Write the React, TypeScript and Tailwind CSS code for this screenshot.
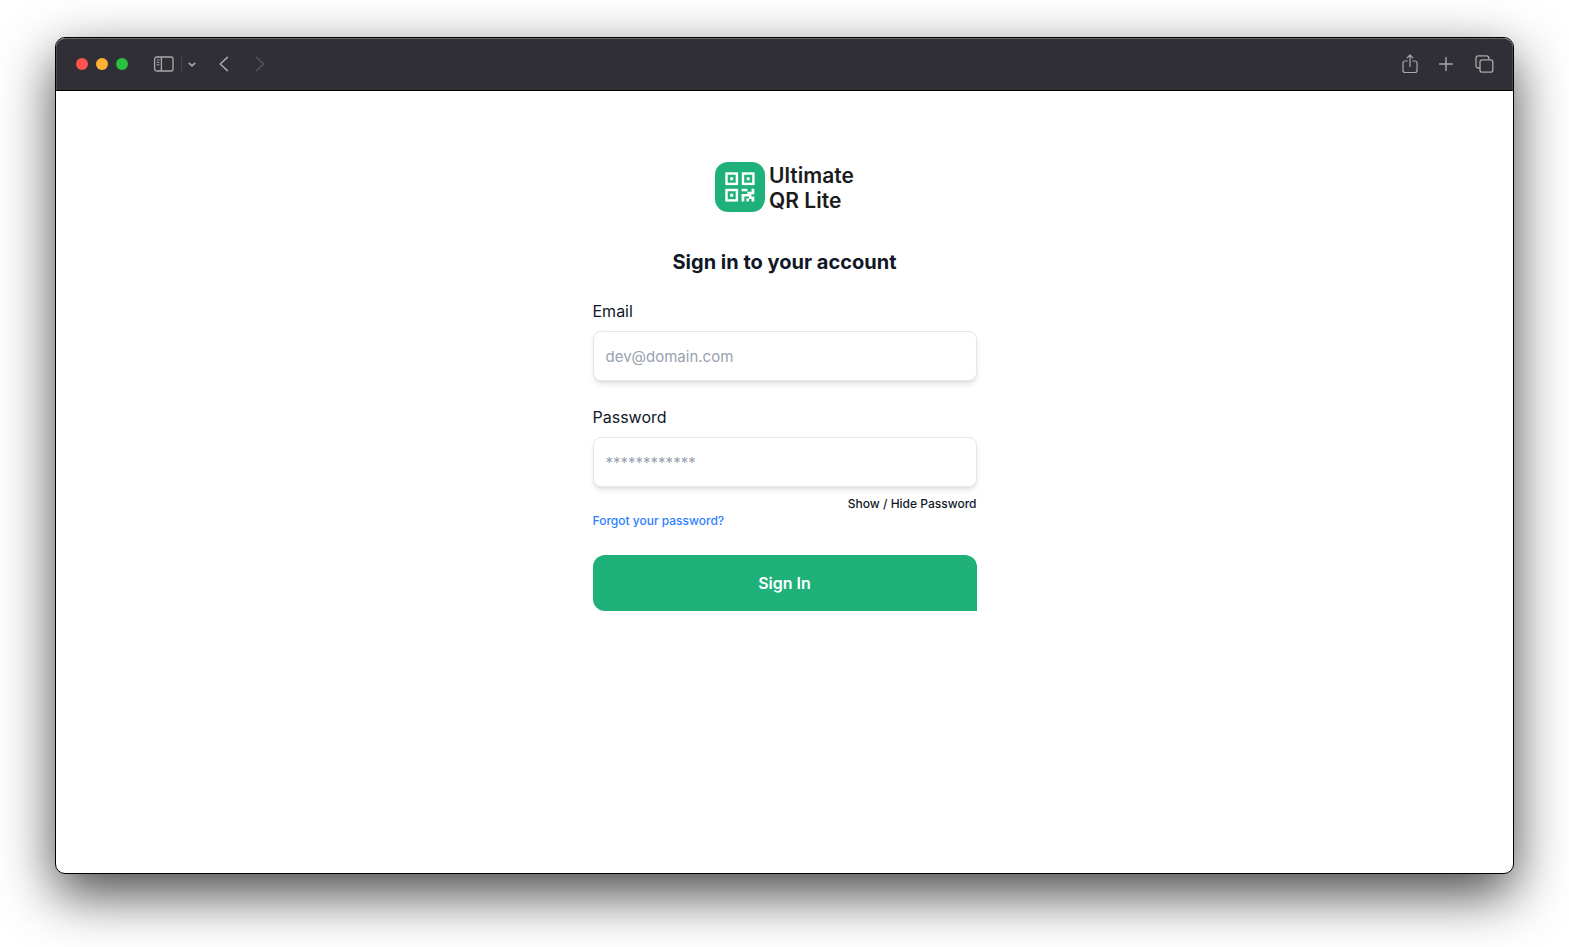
import { useState, type FormEvent, type ReactNode } from 'react';

interface ToolbarButtonProps {
  label: string;
  className?: string;
  disabled?: boolean;
  children?: ReactNode;
}

function ToolbarButton({ label, className = '', disabled, children }: ToolbarButtonProps) {
  return (
    <button type="button" aria-label={label} disabled={disabled} className={`flex items-center justify-center ${className}`}>
      {children}
    </button>
  );
}

function BrowserToolbar() {
  return (
    <header className="flex h-[53px] items-center justify-between rounded-t-[9px] border-x border-t border-b border-x-[#4a4a50] border-t-[#67676c] border-b-black bg-[#312f36] pr-4 pb-[2px] pl-[19px] text-[#a9a8ac]">
      <div className="flex items-center">
        {/* Window controls */}
        <div className="flex gap-2">
          <ToolbarButton label="Close" className="size-3 rounded-full bg-[#ff5350]" />
          <ToolbarButton label="Minimize" className="size-3 rounded-full bg-[#fdb135]" />
          <ToolbarButton label="Zoom" className="size-3 rounded-full bg-[#2ac03f]" />
        </div>

        <ToolbarButton label="Sidebar" className="ml-6">
          <svg width="24" height="18" viewBox="0 0 24 18" fill="none" stroke="currentColor" strokeWidth="1.3">
            <rect x="2.6" y="2" width="18.4" height="14" rx="2" />
            <path d="M9.4 2v14" />
            <path d="M4.8 5h2.6M4.8 7.4h2.6M4.8 9.8h2.6" strokeWidth="1" />
          </svg>
        </ToolbarButton>
        <span className="ml-[5px] h-[18px] w-px bg-[#45444a]" />
        <ToolbarButton label="Tab groups" className="ml-1">
          <svg width="12" height="12" viewBox="0 0 12 12" fill="none" stroke="currentColor" strokeWidth="1.6" strokeLinecap="round" strokeLinejoin="round">
            <path d="M3.2 5.3 6 7.8l2.8-2.5" />
          </svg>
        </ToolbarButton>
        <ToolbarButton label="Back" className="ml-[17px]">
          <svg width="18" height="18" viewBox="0 0 18 18" fill="none" stroke="currentColor" strokeWidth="1.5" strokeLinecap="round" strokeLinejoin="round">
            <path d="M12.4 2.4 5.2 9l7.2 6.6" />
          </svg>
        </ToolbarButton>
        <ToolbarButton label="Forward" className="ml-[18px] text-[#56555b]" disabled>
          <svg width="18" height="18" viewBox="0 0 18 18" fill="none" stroke="currentColor" strokeWidth="1.5" strokeLinecap="round" strokeLinejoin="round">
            <path d="M5.6 2.4 12.8 9l-7.2 6.6" />
          </svg>
        </ToolbarButton>
      </div>

      <div className="flex items-center gap-4">
        <ToolbarButton label="Share">
          <svg width="20" height="22" viewBox="0 0 20 22" fill="none" stroke="currentColor" strokeWidth="1.2" strokeLinecap="round" strokeLinejoin="round">
            <path d="M7.2 8H5a2 2 0 0 0-2 2v7.5a2 2 0 0 0 2 2h10a2 2 0 0 0 2-2V10a2 2 0 0 0-2-2h-2.2" />
            <path d="M10 13.5V2.3M7.2 4.8 10 2l2.8 2.8" />
          </svg>
        </ToolbarButton>
        <ToolbarButton label="New tab">
          <svg width="20" height="20" viewBox="0 0 20 20" fill="none" stroke="currentColor" strokeWidth="1.4" strokeLinecap="round">
            <path d="M10 3.6v12.8M3.6 10h12.8" />
          </svg>
        </ToolbarButton>
        <ToolbarButton label="Tab overview">
          <svg width="24" height="22" viewBox="0 0 24 22" fill="none" stroke="currentColor" strokeWidth="1.3" strokeLinejoin="round">
            <rect x="8" y="6.8" width="12.8" height="12.4" rx="2.2" />
            <path d="M8 15H6.2A2.2 2.2 0 0 1 4 12.8V5a2.2 2.2 0 0 1 2.2-2.2h8.4A2.2 2.2 0 0 1 16.8 5v1.8" />
          </svg>
        </ToolbarButton>
      </div>
    </header>
  );
}

function Logo() {
  return (
    <a href="#" className="flex items-center gap-1">
      <svg width="50" height="50" viewBox="0 0 50 50" aria-hidden="true">
        <rect width="50" height="50" rx="13" fill="#1eb17a" />
        <g fill="none" stroke="#fff" strokeWidth="2.4">
          <rect x="11.5" y="11.5" width="10.4" height="10.4" />
          <rect x="28" y="11.5" width="10.4" height="10.4" />
          <rect x="11.5" y="28" width="10.4" height="10.4" />
        </g>
        <g fill="#fff">
          <path d="M15.2 15.2h3v3h-3zM31.7 15.2h3v3h-3zM15.2 31.7h3v3h-3z" />
          <path d="M26.6 26.8h5.8v2.5h-5.8zM36.6 26.8h2.7v5.4h-6.9v-2.5h4.2zM26.6 32h9.8v2.5h-7.1v5.1h-2.7zM31.4 36.4H34v3.2h-2.6zM34 34.4h5.3v5.2h-2.7v-2.7H34z" />
        </g>
      </svg>
      <span className="pt-0.5 text-[21px] leading-[25px] font-semibold text-[#1b1b1b]">
        Ultimate
        <br />
        QR Lite
      </span>
    </a>
  );
}

interface FieldProps {
  id: string;
  label: string;
  type: string;
  placeholder: string;
  value: string;
  onChange: (value: string) => void;
}

function Field({ id, label, type, placeholder, value, onChange }: FieldProps) {
  return (
    <div>
      <label htmlFor={id} className="block text-base text-gray-900">
        {label}
      </label>
      <input
        id={id}
        type={type}
        placeholder={placeholder}
        value={value}
        onChange={(e) => onChange(e.target.value)}
        className="mt-2 block h-[50px] w-full rounded-lg border border-gray-200 bg-white px-3 text-[15px] text-gray-900 shadow-md outline-none placeholder:text-gray-400 focus:border-[#1eb17a]"
      />
    </div>
  );
}

export default function App() {
  const [email, setEmail] = useState('');
  const [password, setPassword] = useState('');
  const [showPassword, setShowPassword] = useState(false);

  const handleSubmit = (e: FormEvent) => {
    e.preventDefault();
  };

  return (
    <div className="flex min-h-screen bg-white px-[55px] pt-[37px] pb-[73px] font-[Inter,sans-serif]">
      <div className="flex flex-1 flex-col rounded-[10px] border border-black bg-white shadow-[0_20px_54px_rgba(0,0,0,0.72)]">
        <BrowserToolbar />

        <main className="flex flex-col items-center px-6 pt-[70px] pb-16">
          <Logo />
          <h1 className="mt-[34px] text-xl leading-[30px] font-bold text-gray-900">Sign in to your account</h1>

          <form onSubmit={handleSubmit} className="mt-[22px] w-full max-w-sm">
            <div className="space-y-6">
              <Field id="email" label="Email" type="email" placeholder="dev@domain.com" value={email} onChange={setEmail} />
              <Field
                id="password"
                label="Password"
                type={showPassword ? 'text' : 'password'}
                placeholder="************"
                value={password}
                onChange={setPassword}
              />
            </div>

            <div className="mt-2 flex flex-col text-xs leading-[17px] font-medium">
              <button type="button" onClick={() => setShowPassword(!showPassword)} className="self-end text-gray-900">
                Show / Hide Password
              </button>
              <a href="#" className="self-start text-blue-500">
                Forgot your password?
              </a>
            </div>

            <button type="submit" className="mt-[26px] h-14 w-full rounded-xl rounded-br-none bg-[#1eb17a] text-base font-semibold text-white">
              Sign In
            </button>
          </form>
        </main>
      </div>
    </div>
  );
}
